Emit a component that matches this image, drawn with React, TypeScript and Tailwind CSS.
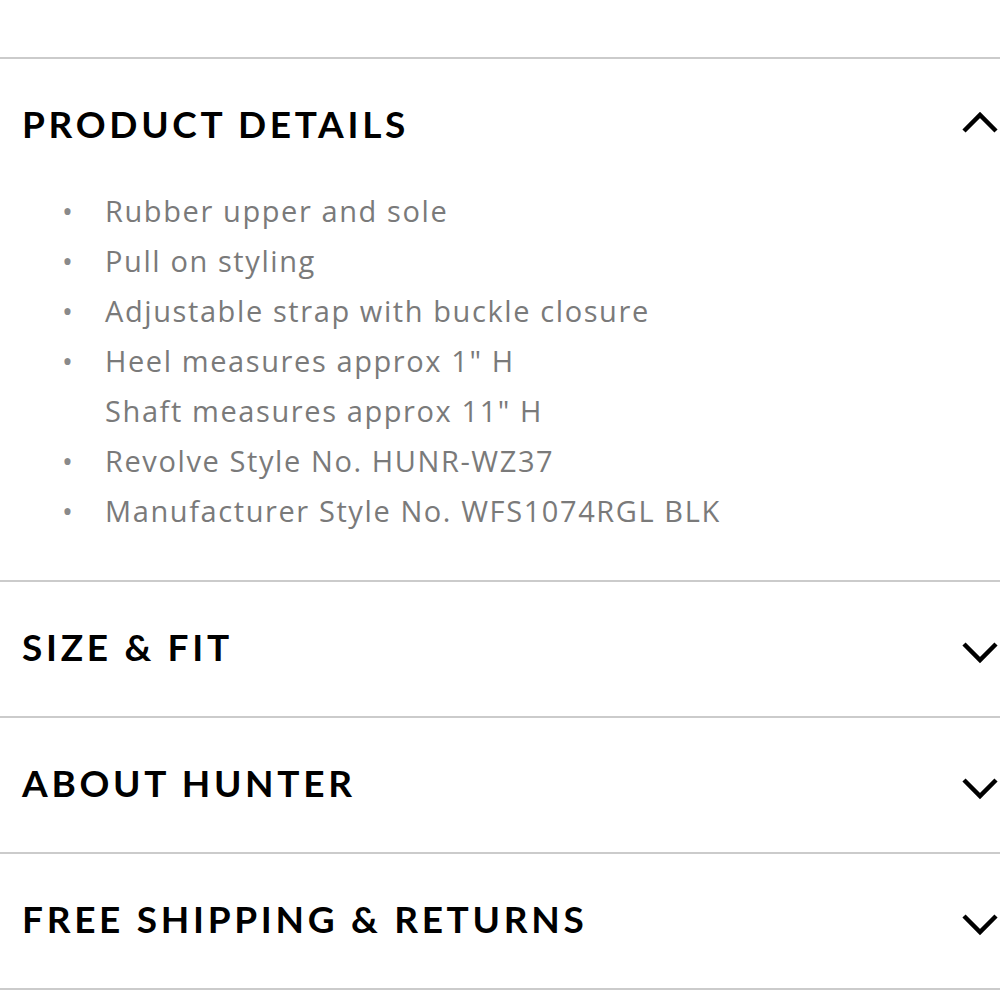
import { useState } from 'react';

const details = [
  ['Rubber upper and sole'],
  ['Pull on styling'],
  ['Adjustable strap with buckle closure'],
  ['Heel measures approx 1" H', 'Shaft measures approx 11" H'],
  ['Revolve Style No. HUNR-WZ37'],
  ['Manufacturer Style No. WFS1074RGL BLK'],
];

const sections = ['SIZE & FIT', 'ABOUT HUNTER', 'FREE SHIPPING & RETURNS'];

const Chevron = ({ up }: { up?: boolean }) => (
  <svg width="38" height="24" viewBox="0 0 38 24" className="shrink-0">
    <polyline
      points={up ? '3,20 19,4 35,20' : '3,4 19,20 35,4'}
      fill="none"
      stroke="#000"
      strokeWidth="4.5"
    />
  </svg>
);

const headingClass =
  "text-[37px] font-bold tracking-[0.1em] text-black font-['Lato',sans-serif] leading-none";

export default function App() {
  const [open, setOpen] = useState('PRODUCT DETAILS');

  return (
    <div className="w-[1000px] h-[1000px] bg-white overflow-hidden">
      <div className="h-[57px]" />
      <section className="border-t-2 border-[#cbcbcb]">
        <button
          type="button"
          onClick={() => setOpen(open === 'PRODUCT DETAILS' ? '' : 'PRODUCT DETAILS')}
          className="flex w-full h-[127px] items-center justify-between pl-[22px] pr-[1px] pt-[1px]"
        >
          <span className={headingClass}>PRODUCT DETAILS</span>
          <Chevron up />
        </button>
        <ul className="pb-[44px] font-['Open_Sans',sans-serif] text-[29px] leading-[50px] tracking-[0.055em] text-[#7a7a7a]">
          {details.map((lines) => (
            <li key={lines[0]} className="flex">
              <span className="w-[105px] shrink-0 pl-[62px] text-[#8a8a8a]">•</span>
              <span>
                {lines.map((l) => (
                  <div key={l}>{l}</div>
                ))}
              </span>
            </li>
          ))}
        </ul>
      </section>
      {sections.map((s) => (
        <section key={s} className="border-t-2 border-[#cbcbcb]">
          <button
            type="button"
            className="flex w-full h-[134px] items-center justify-between pl-[22px] pr-[1px] pb-[6px]"
          >
            <span className={headingClass}>{s}</span>
            <span className="pt-[12px]">
              <Chevron />
            </span>
          </button>
        </section>
      ))}
      <div className="border-t-2 border-[#cbcbcb]" />
    </div>
  );
}
